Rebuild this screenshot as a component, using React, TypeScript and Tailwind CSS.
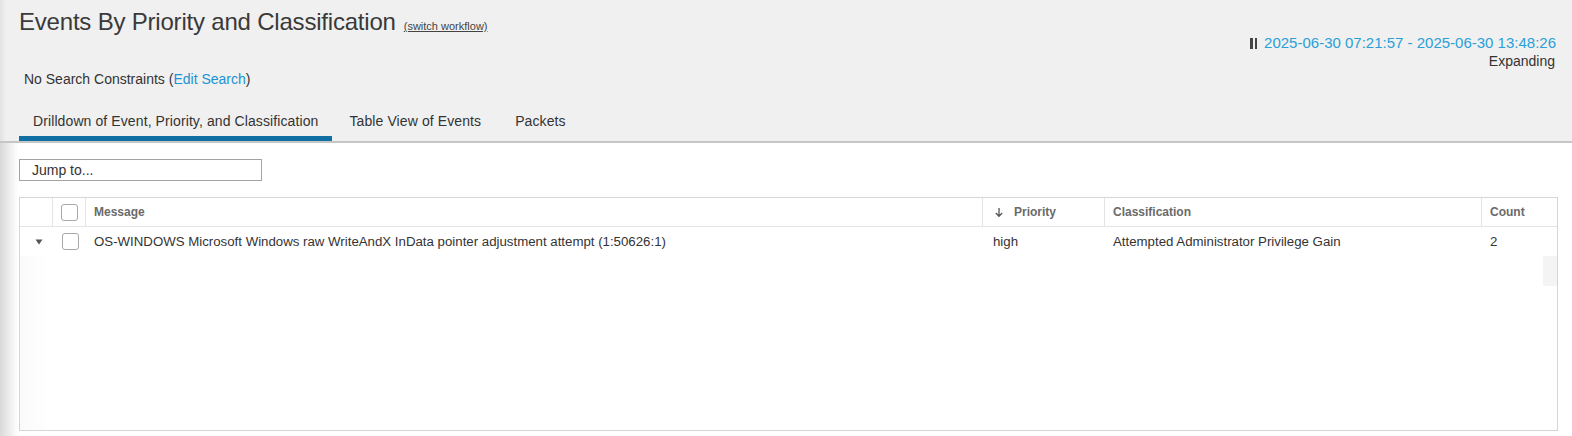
import React from "react";

// columns of the drilldown table, widths taken from the grid template below
const columns = [
  { key: "expand", label: "" },
  { key: "check", label: "" },
  { key: "message", label: "Message" },
  { key: "priority", label: "Priority" },
  { key: "classification", label: "Classification" },
  { key: "count", label: "Count" },
];

const rows = [
  {
    id: 1,
    message:
      "OS-WINDOWS Microsoft Windows raw WriteAndX InData pointer adjustment attempt (1:50626:1)",
    priority: "high",
    classification: "Attempted Administrator Privilege Gain",
    count: 2,
  },
];

function Checkbox() {
  return <span className="block w-[17px] h-[17px] rounded-[3px] border border-[#a8a8a8] bg-white" />;
}

function App() {
  const tabs = ["Drilldown of Event, Priority, and Classification", "Table View of Events", "Packets"];

  return (
    <div className="min-h-[436px] w-full font-['Liberation_Sans',Arial,sans-serif] text-[#333]">
      {/* Header area */}
      <div className="bg-[linear-gradient(to_right,#e2e2e2,#f0f0f0_6px)] border-b-2 border-[#c6c6c6]">
        <div className="flex justify-between items-start">
          <div className="pl-[19px] pt-[7px] flex items-baseline">
            <h1 className="text-[24px] leading-[30px] font-normal tracking-[-0.2px] text-[#3a3a3a]">
              Events By Priority and Classification
            </h1>
            <a className="ml-[8px] text-[11px] underline text-[#444]">(switch workflow)</a>
          </div>
          <div className="pt-[34px] pr-[16px] text-right text-[14px] leading-[18px]">
            <div className="flex items-center justify-end">
              <span className="flex gap-[2px] mr-[7px]">
                <span className="block w-[2.5px] h-[11px] bg-[#444]" />
                <span className="block w-[2.5px] h-[11px] bg-[#444]" />
              </span>
              <span className="text-[15px] text-[#2a9fd8]">2025-06-30 07:21:57 - 2025-06-30 13:48:26</span>
            </div>
            <div className="pr-[1px]">Expanding</div>
          </div>
        </div>

        <div className="pl-[24px] text-[14px] leading-[18px]">
          No Search Constraints (<a className="text-[#1b93d4]">Edit Search</a>)
        </div>

        {/* Tabs */}
        <div className="flex pl-[19px] mt-[24px] text-[14px] leading-[18px] tracking-[0.1px]">
          {tabs.map((t, i) => (
            <div
              key={t}
              className={
                i === 0
                  ? "px-[14px] pb-[6px] border-b-[5px] border-[#1070a3]"
                  : "px-[17px] pb-[6px] border-b-[5px] border-transparent"
              }
            >
              {t}
            </div>
          ))}
        </div>
      </div>

      {/* Content */}
      <div className="bg-[linear-gradient(to_right,#d9d9d9,#ffffff_18px)] pt-[16px] pb-[5px]">
        <div className="ml-[19px] w-[243px] h-[22px] border border-[#a3a3a3] bg-white pl-[12px] text-[14px] leading-[20px]">
          Jump to...
        </div>

        <div className="ml-[19px] mt-[16px] w-[1539px] h-[234px] border border-[#d6d6d6] bg-[linear-gradient(to_right,#fafafa,#ffffff_30px)]">
          {/* header row */}
          <div className="grid grid-cols-[33px_33px_897px_122px_377px_1fr] h-[29px] border-b border-[#e4e4e4] bg-white text-[12px] font-bold text-[#6a6a6a]">
            {columns.map((c) => (
              <div
                key={c.key}
                className={
                  "flex items-center " +
                  (c.key === "count" ? "" : "border-r border-[#e4e4e4] ") +
                  (c.key === "check" ? "justify-center pl-[1px]" : "pl-[8px]")
                }
              >
                {c.key === "check" && <Checkbox />}
                {c.key === "priority" && (
                  <svg width="10" height="11" viewBox="0 0 10 11" className="mr-[10px] ml-[3px]">
                    <path d="M5 1v8M1.8 6l3.2 3.3L8.2 6" fill="none" stroke="#555" strokeWidth="1.3" />
                  </svg>
                )}
                {c.label}
              </div>
            ))}
          </div>

          {/* data rows */}
          {rows.map((r) => (
            <div
              key={r.id}
              className="grid grid-cols-[33px_33px_897px_122px_377px_1fr] h-[29px] bg-white text-[13.25px] items-center"
            >
              <div className="flex justify-center pl-[4px]">
                <svg width="8" height="6" viewBox="0 0 8 6">
                  <path d="M0.5 0.5h7L4 5.5z" fill="#555" />
                </svg>
              </div>
              <div className="flex justify-center pl-[2px]">
                <Checkbox />
              </div>
              <div className="pl-[8px]">{r.message}</div>
              <div className="pl-[10px]">{r.priority}</div>
              <div className="pl-[8px]">{r.classification}</div>
              <div className="pl-[8px]">{r.count}</div>
            </div>
          ))}
          <div className="flex justify-end">
            <div className="w-[14px] h-[30px] bg-[#f4f4f4]" />
          </div>
        </div>
      </div>
    </div>
  );
}

export default App;
